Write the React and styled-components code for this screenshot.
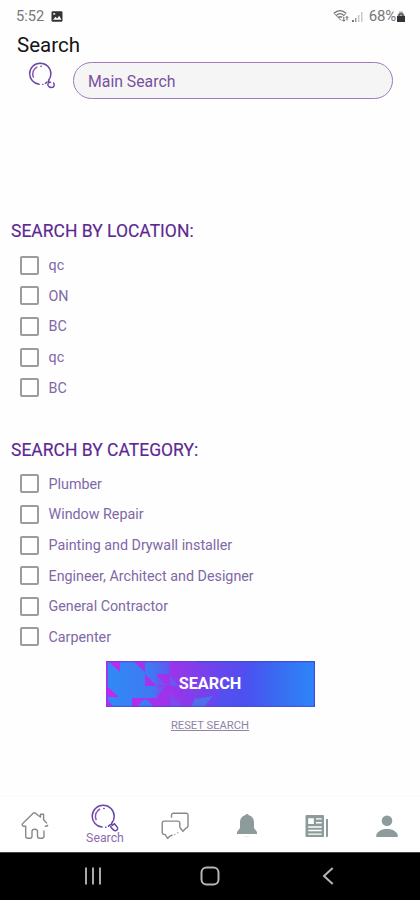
import styled, { createGlobalStyle } from 'styled-components';

const locations = ['qc', 'ON', 'BC', 'qc', 'BC'];

const categories = [
  'Plumber',
  'Window Repair',
  'Painting and Drywall installer',
  'Engineer, Architect and Designer',
  'General Contractor',
  'Carpenter',
];

const Magnifier = ({ width, height, long }) => (
  <svg width={width} height={height} viewBox="0 0 28 28" fill="none">
    <g stroke="#6847a4" strokeWidth="1.5" strokeLinecap="round">
      <path d="M11 23.1C5.3 22.3 1.2 17.8 1.2 12.3C1.2 6.1 6.1 1.2 12.2 1.2C18.3 1.2 23.2 6.1 23.2 12.2C23.2 14.8 22.4 17 21 18.8" />
      <path d="M14.6 23.2h.3" />
      <path d="M17.5 22.2L19.3 20.7" />
      <path
        d={
          long
            ? 'M21 18.8C20.1 19.6 20.3 20.6 21.2 21.3L23.5 19.8L26.4 23.3C27.2 25 26 26.9 24.3 26.8C22.6 26.7 21.2 24.7 19.6 22.5'
            : 'M21 18.8C20.2 20.1 21.1 21.3 22.8 21M26 21.7C27.5 23.7 26.5 26.4 24.1 26.5C21.5 26.6 19.7 24.8 20.1 22.8C20.3 21.6 21.4 21 22.8 21'
        }
      />
      <path d="M12.8 4.5h.3" />
    </g>
    <path d="M5.3 16.2C3.3 12.1 4.7 7 9.1 5" stroke="#8750b6" strokeWidth="1.5" />
  </svg>
);

const StatusBar = () => (
  <Status>
    <span>5:52</span>
    <svg className="photo" width="12" height="11" viewBox="0 0 12 11">
      <rect x=".5" y=".3" width="11" height="10.4" rx="1.3" fill="#333" />
      <path d="M2 8.8L4.5 5.7L6.1 7.4L8.2 4.8L10.5 8.8Z" fill="#fff" />
      <rect x="2.2" y="2" width="2" height="1.7" fill="#ddd" />
    </svg>
    <div className="right">
      <svg width="17" height="14" viewBox="0 0 17 14" fill="none" stroke="#777" strokeWidth="1.3">
        <path d="M1 4.3C4.5.6 9.5.6 13 4.3M3.2 6.6C5.7 4 8.5 4 11 6.6M5.2 8.6C6.5 7.4 7.7 7.4 9 8.6" />
        <path d="M1 4.3L8.2 11.5M13 4.3L10 7.5" strokeWidth="1" />
        <path d="M10.8 8v4M9.4 10.8l1.4 1.5l1.2-1.5M14 11.5v-4M12.8 8.8L14 7.5l1.3 1.3" stroke="#666" strokeWidth="1" />
      </svg>
      <svg className="signal" width="13" height="13" viewBox="0 0 13 13">
        <path d="M1 10h2v2H1z" fill="#777" />
        <path d="M4 8h1.5v4H4z" fill="#999" />
        <path d="M7 5h1.5v7H7zM10 2h1.5v10H10z" fill="#c9c9c9" />
      </svg>
      <span>68%</span>
      <svg width="10" height="13" viewBox="0 0 10 13">
        <path d="M3 3V1.5h4V3l1.5 1.5v2h-7v-2z" fill="#aaa" />
        <path d="M1 6h8v6H1z" fill="#333" />
        <path d="M3 6V4.5Q5 2.8 7 4.5V6" fill="none" stroke="#333" />
      </svg>
    </div>
  </Status>
);

const CheckGroup = ({ title, items, gap }) => (
  <Group $gap={gap}>
    <h2>{title}</h2>
    {items.map((item, i) => (
      <CheckRow key={i}>
        <input type="checkbox" />
        <span>{item}</span>
      </CheckRow>
    ))}
  </Group>
);

const ButtonPattern = () => (
  <svg className="pattern" width="209" height="46" viewBox="0 0 209 46">
    <defs>
      <linearGradient id="base">
        <stop offset="0" stopColor="#2f8bf6" />
        <stop offset=".22" stopColor="#4078f2" />
        <stop offset=".34" stopColor="#6b4bef" />
        <stop offset=".5" stopColor="#594df0" />
        <stop offset=".68" stopColor="#4a52f0" />
        <stop offset=".85" stopColor="#3770f2" />
        <stop offset="1" stopColor="#2e86fa" />
      </linearGradient>
      <linearGradient id="magenta" gradientUnits="userSpaceOnUse" x1="0" x2="150" y1="0" y2="0">
        <stop offset="0" stopColor="#c02af0" />
        <stop offset=".45" stopColor="#9a34ea" />
        <stop offset="1" stopColor="#5b48ee" stopOpacity=".2" />
      </linearGradient>
    </defs>
    <path d="M0 0H209V46H0Z" fill="url(#base)" />
    <g fill="url(#magenta)">
      <path d="M3 1H14V11ZM28 1H39V11ZM39 13L51 25H39ZM1 25L13 36H1ZM1 38L7 45H1Z" />
      <path d="M26 37H51V46H47Q39 31 32 46H26Z" />
      <path d="M51 13H64V25L51 24ZM51 25H64V46H51ZM64 1H147L138 13L118 24L105 46H64Z" />
    </g>
    <path d="M51 24V15L60 24ZM64 25V14L73 25ZM51 26H59L51 36Z" fill="#4a70f2" opacity=".6" />
    <path d="M85 46L95 23L88 38L107 35L98 46Z" fill="#368de9" opacity=".6" />
    <path d="M64 46V32L78 46Z" fill="#4d74ee" opacity=".35" />
    <path d="M0 0H90V1.3H1.5V46H0Z" fill="#7040e4" />
    <path d="M0 1H1.8V46H0Z" fill="#a833e9" />
    <path d="M90 0H209V46H207.8V1.2H90Z" fill="#404bd9" />
    <path d="M0 44.8H209V46H0Z" fill="#4848dc" opacity=".65" />
  </svg>
);

const HomeIcon = () => (
  <svg width="28" height="29" viewBox="0 0 28 29" fill="none" stroke="#888" strokeWidth="1.4" strokeLinejoin="round">
    <path d="M17.5 4.7L14.6 2.2Q13.4 1.2 12.2 2.3L1.7 12.4Q.5 14 2.2 15.3H4.7V25.2Q4.8 27.2 6.8 27.3H9Q11 27.2 11 25V20.2Q11.1 18.2 13.7 18.2Q16.4 18.2 16.5 20.2V25Q16.5 27.2 18.5 27.3H21Q23 27.1 23 25V19.5" />
    <path d="M17.5 4.7L19.5 6V3.3H22.6V8.7L26 12.4M27 14Q25.8 15.6 23.8 15.2" />
  </svg>
);

const ChatIcon = () => (
  <svg width="28" height="28" viewBox="0 0 28 28" fill="none" stroke="#888" strokeWidth="1.4" strokeLinejoin="round">
    <path d="M10.5 5.8V3Q10.6 1.4 12.2 1.3H25.5Q27 1.4 27 3V14.2Q26.8 16 24.8 16.2L22 19.3L18.8 15.5" />
    <path d="M18.8 15.5V11Q18.8 9.2 17 9.1H3Q1.3 9.3 1.2 11V20.5Q1.2 22 2.8 22.4H4L6.6 26.5L9 24.1L11.5 23" />
    <path d="M13 22.8L14.5 22M16 21.2L17.5 20.4" stroke="#bbb" />
  </svg>
);

const BellIcon = () => (
  <svg width="22" height="25" viewBox="0 0 22 25" fill="#8d9c9b">
    <path d="M9.1 2.2Q11 0 12.9 2.2C16.5 3.3 18 6 18 10V15L21 19V21H1V19L4 15V10C4 6 5.5 3.3 9.1 2.2Z" />
    <path d="M7.5 23H14Q11 25.5 7.5 23Z" opacity=".2" />
  </svg>
);

const NewsIcon = () => (
  <svg width="24" height="24" viewBox="0 0 24 24" fill="#8d9c9b">
    <path fillRule="evenodd" d="M1.5 1H18Q19 1 19 2V23H1.5Q.5 23 .5 22V2Q.5 1 1.5 1ZM3.2 4.2V10H8.8V4.2ZM11 4.2V5.5H16.7V4.2ZM11 8V9.5H16.7V8ZM3.2 12.2V13.8H16.7V12.2ZM3.2 15.8V17.3H16.7V15.8ZM3.2 19.5V20.7H16.7V19.5Z" />
    <path d="M21 5H23V22Q23 23 22 23H21Z" />
  </svg>
);

const PersonIcon = () => (
  <svg width="22" height="24" viewBox="0 0 22 24" fill="#8d9c9b">
    <circle cx="11" cy="6.8" r="5.3" />
    <path d="M.3 23V20.7C2.4 16.7 6 15 11 15C16 15 19.6 16.7 21.7 20.7V23Z" />
  </svg>
);

const App = () => {
  return (
    <Screen>
      <GlobalStyle />
      <StatusBar />
      <Title>Search</Title>
      <SearchRow>
        <Magnifier width={28} height={27} />
        <input type="text" placeholder="Main Search" />
      </SearchRow>

      <main>
        <CheckGroup title="SEARCH BY LOCATION:" items={locations} gap="34.6px" />
        <CheckGroup title="SEARCH BY CATEGORY:" items={categories} gap="8.8px" />
        <Actions>
          <SearchButton>
            <ButtonPattern />
            <span>SEARCH</span>
          </SearchButton>
          <ResetButton>RESET SEARCH</ResetButton>
        </Actions>
      </main>

      <TabBar>
        <Tab>
          <HomeIcon />
        </Tab>
        <Tab $active>
          <Magnifier width={28} height={28} long />
          <span>Search</span>
        </Tab>
        <Tab>
          <ChatIcon />
        </Tab>
        <Tab $shift="2px">
          <BellIcon />
        </Tab>
        <Tab $shift="2px">
          <NewsIcon />
        </Tab>
        <Tab $shift="2px">
          <PersonIcon />
        </Tab>
      </TabBar>

      <SystemBar>
        <svg width="18" height="18" viewBox="0 0 18 18" stroke="#a9a9a9" strokeWidth="2">
          <path d="M2 .5v17M9 .5v17M16 .5v17" />
        </svg>
        <svg width="20" height="20" viewBox="0 0 20 20" fill="none" stroke="#b5b5b5" strokeWidth="2">
          <rect x="1.5" y="1.5" width="17" height="17" rx="5" />
        </svg>
        <svg width="12" height="18" viewBox="0 0 12 18" fill="none" stroke="#b5b5b5" strokeWidth="2">
          <path d="M10.7 1L2 9L10.7 17" />
        </svg>
      </SystemBar>
    </Screen>
  );
};

const GlobalStyle = createGlobalStyle`
  * {
    box-sizing: border-box;
  }
  body {
    margin: 0;
    background: #fefefe;
    font-family: Roboto, sans-serif;
  }
  svg {
    display: block;
    flex-shrink: 0;
  }
  button,
  input {
    font-family: inherit;
  }
`;

const Screen = styled.div`
  width: 420px;
  height: 900px;
  display: flex;
  flex-direction: column;
  overflow: hidden;
  main {
    flex: 1;
    padding-top: 120px;
  }
`;

const Status = styled.header`
  height: 32px;
  display: flex;
  align-items: center;
  padding: 0 14px 0 16px;
  color: #777;
  font-size: 14.7px;
  .photo {
    margin-left: 7px;
  }
  .right {
    margin-left: auto;
    display: flex;
    align-items: center;
  }
  .signal {
    margin-left: 1px;
  }
  .right span {
    margin: 0 0 0 5px;
    font-size: 15px;
    letter-spacing: -0.2px;
  }
`;

const Title = styled.h1`
  margin: 0;
  padding-left: 17px;
  height: 30px;
  line-height: 27px;
  font-size: 20.5px;
  font-weight: 400;
  color: #151515;
`;

const SearchRow = styled.div`
  height: 37px;
  display: flex;
  padding-left: 28px;
  gap: 17px;
  input {
    width: 320px;
    height: 37px;
    padding: 2px 14px 0;
    border: 1.4px solid #9c7db8;
    border-radius: 19px;
    background: #f5f5f6;
    font-size: 15.8px;
    color: #7a519f;
  }
  input::placeholder {
    color: #7a519f;
    opacity: 1;
  }
`;

const Group = styled.section`
  margin-bottom: ${(props) => props.$gap};
  h2 {
    margin: 0;
    padding-left: 11px;
    height: 31px;
    line-height: 24px;
    font-size: 17.5px;
    font-weight: 400;
    color: #5d2892;
    -webkit-text-stroke: 0.15px #5d2892;
  }
`;

const CheckRow = styled.label`
  height: 30.6px;
  display: flex;
  align-items: center;
  padding-left: 19.5px;
  gap: 10px;
  font-size: 14.3px;
  color: #8068a7;
  input {
    appearance: none;
    width: 19px;
    height: 19px;
    margin: 0;
    border: 2px solid #9c9c9c;
    border-radius: 2px;
    background: #fff;
  }
`;

const Actions = styled.div`
  display: flex;
  flex-direction: column;
  align-items: center;
`;

const SearchButton = styled.button`
  width: 209px;
  height: 46px;
  padding: 0;
  border: none;
  display: grid;
  place-items: center;
  .pattern,
  span {
    grid-area: 1 / 1;
  }
  span {
    color: #fff;
    font-size: 16.3px;
    font-weight: 700;
    z-index: 1;
  }
`;

const ResetButton = styled.button`
  margin-top: 11px;
  padding: 0;
  border: none;
  background: none;
  font-size: 11.2px;
  line-height: 15px;
  color: #9184a4;
  text-decoration: underline;
`;

const TabBar = styled.nav`
  height: 56px;
  display: grid;
  grid-template-columns: repeat(6, 70px);
  border-top: 1px solid #fafafa;
  background: #fff;
`;

const Tab = styled.div`
  display: flex;
  flex-direction: column;
  align-items: center;
  justify-content: ${(props) => (props.$active ? 'flex-start' : 'center')};
  padding: ${(props) => (props.$active ? '7px 0 0' : '2px 0 0')};
  margin-left: ${(props) => props.$shift || 0};
  margin-right: -${(props) => props.$shift || '0px'};
  span {
    margin-top: -1px;
    font-size: 12.3px;
    line-height: 14px;
    color: #8c6cae;
  }
`;

const SystemBar = styled.footer`
  height: 48px;
  background: #000;
  border-top: 1px solid #444;
  display: flex;
  align-items: center;
  padding: 0 0 2px 84px;
  svg + svg {
    margin-left: 98px;
  }
  svg:last-child {
    margin-left: 102px;
  }
`;

export default App;
